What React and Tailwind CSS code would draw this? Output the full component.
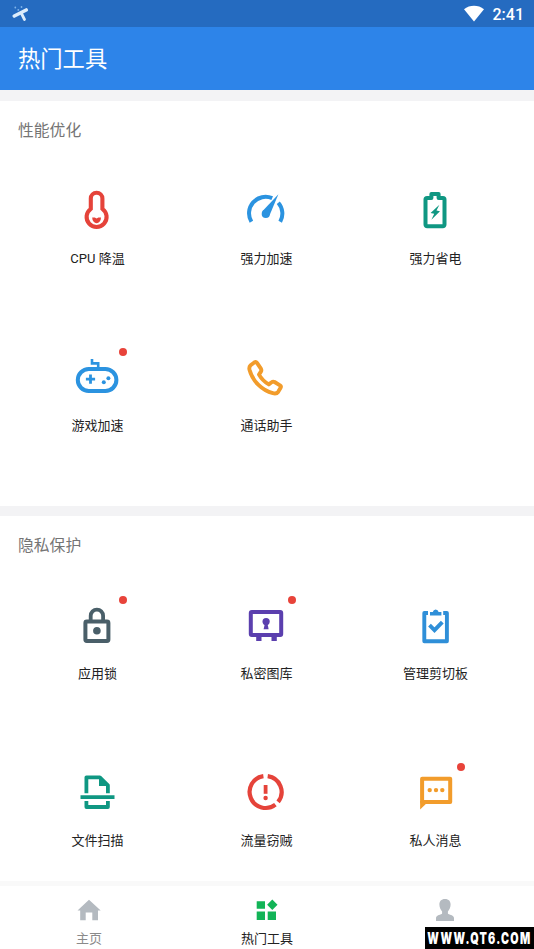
import clsx from 'clsx';

// Tool icons, all drawn in a 48x48 box
const icons = {
  cpu: (
    <>
      <path d="M17.8 11.6a5.8 5.8 0 0 1 11.6 0V21.8a10 10 0 1 1 -11.6 0z" stroke="#e5433a" strokeWidth="4.1" />
      <path d="M19.2 30.6h2.6l1.800 1 1.800-1h2.600a4.400 5.600 0 0 1-8.800 0z" fill="#e5433a" />
    </>
  ),
  boost: (
    <>
      <path d="M9.4 34.8A16.5 16.5 0 0 1 30.2 11.2M36.3 15.8A16.5 16.5 0 0 1 38.2 34.8" stroke="#2b93e0" strokeWidth="4" />
      <path d="M36.4 7.2L27.6 28.2L20.4 24.2z" fill="#2b93e0" />
      <circle cx="23.8" cy="26.9" r="4.1" fill="#2b93e0" />
    </>
  ),
  battery: (
    <>
      <path d="M14.5 12.5a1.6 1.6 0 0 1 1.6-1.6H20.4V7h7.2v3.9h4.3a1.6 1.6 0 0 1 1.6 1.6V37.6a1.6 1.6 0 0 1-1.6 1.6H16.1a1.6 1.6 0 0 1-1.6-1.6z" stroke="#0f9782" strokeWidth="4" strokeLinejoin="round" />
      <path d="M28.4 17.8L19.6 26l3.6.7L20.4 32.8L29 24.2l-3.5-.7z" fill="#0f9782" />
    </>
  ),
  game: (
    <>
      <rect x="4.8" y="15" width="38.6" height="22" rx="11" stroke="#2b93e0" strokeWidth="4" />
      <path d="M19 5v4.4h6.2V14" stroke="#2b93e0" strokeWidth="2.6" />
      <path d="M17.5 20.6v9.2M12.9 25.2h9.2" stroke="#2b93e0" strokeWidth="2.8" />
      <circle cx="35.4" cy="24.2" r="2" fill="#2b93e0" />
      <circle cx="30.8" cy="28.2" r="2" fill="#2b93e0" />
    </>
  ),
  call: (
    <path
      d="M8.6 11.2L12.6 8.2Q14 7.4 15 8.8L18.9 14.6Q19.8 16.2 18.9 17.6L17 20.6Q20.5 26.8 26.8 30.4L29.6 28.3Q31 27.2 32.6 28L38 31.3Q39.4 32.3 38.6 33.7L36.2 37.8Q34.6 40.2 30.8 39.2C20.5 36.5 10.6 27.5 7.5 15.8Q6.8 12.8 8.6 11.2z"
      stroke="#f29c2b" strokeWidth="3.9" strokeLinejoin="round"
    />
  ),
  lock: (
    <>
      <rect x="12.4" y="19.6" width="23" height="19.4" rx="1.4" stroke="#4a5f69" strokeWidth="4" />
      <path d="M17.7 19v-5.2a6.2 6.2 0 0 1 12.4 0V19" stroke="#4a5f69" strokeWidth="3.8" />
      <circle cx="23.9" cy="28.8" r="3.8" fill="#4a5f69" />
    </>
  ),
  safe: (
    <>
      <rect x="8.8" y="10" width="30.4" height="23" rx="1" stroke="#5b3fae" strokeWidth="4" />
      <path d="M14.2 34h5.3v5h-5.3zM29.5 34h5.3v5h-5.3z" fill="#5b3fae" />
      <circle cx="24.1" cy="19.6" r="3.6" fill="#5b3fae" />
      <path d="M23 21h2.4l1.2 6.3h-5z" fill="#5b3fae" />
    </>
  ),
  clipboard: (
    <>
      <path d="M17 11h-3.7v28.2h22.6V11h-3.7" stroke="#2f8fd8" strokeWidth="3.9" strokeLinejoin="round" />
      <path d="M19 13.4V10h2.8a3 3.4 0 0 1 5.8 0h2.8v3.4z" fill="#2f8fd8" />
      <path d="M18.5 23.2l5 5 7.8-8" stroke="#2f8fd8" strokeWidth="3.9" />
    </>
  ),
  scan: (
    <>
      <path d="M13.4 24.3V8.3h13.4L34.9 16.4v7.9M13.4 32v6h21.5v-6" stroke="#0f9782" strokeWidth="3.8" strokeLinejoin="round" />
      <path d="M26 7.6V17h9.4z" fill="#0f9782" />
      <path d="M7.5 28.1h34" stroke="#0f9782" strokeWidth="3.6" />
    </>
  ),
  traffic: (
    <>
      <path d="M25.7 7.1A16 16 0 0 1 36.1 32.9M33.4 35.6A16 16 0 1 1 21.4 7.1" stroke="#e5433a" strokeWidth="4.2" />
      <path d="M21.7 16h3.8v8.8h-3.8z" fill="#e5433a" />
      <circle cx="23.6" cy="29" r="2.2" fill="#e5433a" />
    </>
  ),
  message: (
    <>
      <path d="M11.1 9.7h28.1v23.2H11.1z" stroke="#f29c2b" strokeWidth="4" strokeLinejoin="round" />
      <path d="M9.1 32v8.6l6-5.9V32z" fill="#f29c2b" />
      <circle cx="18.7" cy="21.1" r="2.2" fill="#f29c2b" />
      <circle cx="25" cy="21.1" r="2.2" fill="#f29c2b" />
      <circle cx="31.3" cy="21.1" r="2.2" fill="#f29c2b" />
    </>
  ),
};

const sections = [
  {
    title: '性能优化',
    tools: [
      { icon: 'cpu', label: 'CPU 降温' },
      { icon: 'boost', label: '强力加速' },
      { icon: 'battery', label: '强力省电' },
      { icon: 'game', label: '游戏加速', dot: true },
      { icon: 'call', label: '通话助手' },
    ],
  },
  {
    title: '隐私保护',
    tools: [
      { icon: 'lock', label: '应用锁', dot: true },
      { icon: 'safe', label: '私密图库', dot: true },
      { icon: 'clipboard', label: '管理剪切板' },
      { icon: 'scan', label: '文件扫描' },
      { icon: 'traffic', label: '流量窃贼' },
      { icon: 'message', label: '私人消息', dot: true },
    ],
  },
];

const tabs = [
  { id: 'home', label: '主页', path: 'M12 1.8L23.7 12.4H21V22.3H15.3V14.4H8.7V22.3H3.2V12.4H.5z' },
  { id: 'tools', label: '热门工具', active: true, path: 'M1.7 3.2H10v7.6H1.7zM1.7 13.6H10V22H1.7zM12.7 13.6H21V22h-8.3zM17.3 1.6l5.2 5.2-5.2 5.2-5.2-5.2z' },
  { id: 'me', path: 'M12 1c3.8 0 5.7 2.4 5.6 5.8-.1 3-1.2 5.1-2.7 6.6v2.2c.5 1.2 6.1 1.6 6.1 4.4V23H3v-3c0-2.8 5.6-3.2 6.1-4.4v-2.2C7.6 11.9 6.5 9.8 6.4 6.8 6.3 3.4 8.2 1 12 1z' },
];

function Tool({ icon, label, dot }) {
  return (
    <div className="relative flex h-[167px] flex-col items-center pt-[26px]">
      <svg className="mr-px" width="48" height="48" viewBox="0 0 48 48" fill="none">{icons[icon]}</svg>
      <span className="mt-3.5 text-[13px] leading-5 text-[#222222]">{label}</span>
      {dot && <span className="absolute left-1/2 top-[19.5px] ml-[21.500px] size-2 rounded-full bg-[#e8433a]" />}
    </div>
  );
}

export default function App() {
  return (
    <div className="relative flex h-[949px] w-[534px] flex-col overflow-hidden bg-[#f3f3f5] font-['Roboto','Noto_Sans_CJK_SC',sans-serif]">
      {/* Status bar */}
      <div className="flex h-[27px] shrink-0 items-center justify-between bg-[#256bc0] pl-3 pr-2.5">
        <svg width="17" height="17" viewBox="0 0 17 17" fill="none" stroke="#dcecfb" strokeLinecap="round">
          <path d="M2.3 11L14.2 5" strokeWidth="3.6" />
          <path d="M9.5 8.5l3 6" strokeWidth="2.8" />
          <path d="M3.3 2.5v.1M9.5 2v.1M6.3 4.8v.1" stroke="#7fb4ea" strokeWidth="1.8" />
        </svg>
        <div className="flex items-center gap-[9px] text-white">
          <svg width="20" height="17" viewBox="0 0 20 17" fill="#fff">
            <path d="M0 4.3C5.8-.3 14.2-.3 20 4.3L10 16.5z" />
          </svg>
          <span className="pt-0.5 text-[16px] font-medium leading-5">2:41</span>
        </div>
      </div>

      {/* Title bar */}
      <div className="flex h-[63px] shrink-0 items-center bg-[#2d84e9] px-[18px]">
        <h1 className="text-[22.3px] leading-8 text-white">热门工具</h1>
      </div>

      {/* Tool sections */}
      <div className="flex min-h-0 flex-1 flex-col gap-2.5 overflow-hidden pt-[11px]">
        {sections.map((s) => (
          <section key={s.title} className="h-[405px] shrink-0 bg-white">
            <h2 className="h-[60px] pl-[18px] pt-[18px] text-[15.8px] leading-6 text-[#757575]">{s.title}</h2>
            <div className="grid grid-cols-3 pl-[13px] pr-[14px]">
              {s.tools.map((t) => <Tool key={t.label} {...t} />)}
            </div>
          </section>
        ))}
      </div>

      {/* Bottom tabs */}
      <nav className="grid h-[68px] shrink-0 grid-cols-3 border-t-[5px] border-[#f9f9f9] bg-white">
        {tabs.map((t) => (
          <div key={t.id} className="flex flex-col items-center pt-3">
            <svg width="24" height="24" viewBox="0 0 24 24" fill={t.active ? '#12b457' : '#b4bac0'}>
              <path d={t.path} />
            </svg>
            {t.label && <span className={clsx('mt-[7px] text-[13px] leading-5', t.active ? 'text-[#222222]' : 'text-[#8a8a8a]')}>{t.label}</span>}
          </div>
        ))}
      </nav>

      {/* Site tag */}
      <div className="absolute bottom-0 right-0 flex h-[22px] w-[109px] items-center justify-center bg-black">
        <span className="scale-x-[0.69] whitespace-nowrap pt-0.5 font-['Inter',sans-serif] text-[15.5px] font-black tracking-[1.900px] text-white">WWW.QT6.COM</span>
      </div>
    </div>
  );
}
